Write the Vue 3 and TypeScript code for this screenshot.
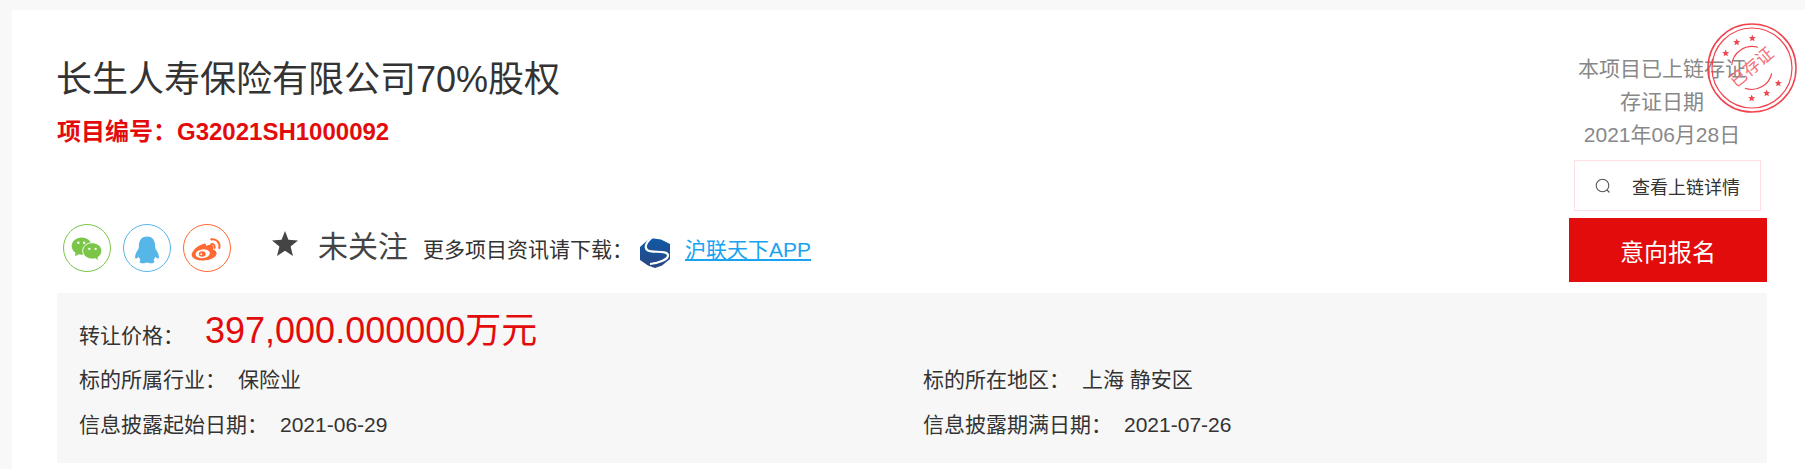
<script setup lang="ts">
const infoRows: { label: string; value: string }[] = [
  { label: '标的所属行业：', value: '保险业' },
  { label: '标的所在地区：', value: '上海 静安区' },
  { label: '信息披露起始日期：', value: '2021-06-29' },
  { label: '信息披露期满日期：', value: '2021-07-26' },
]
const stampStars: [number, number][] = [
  [18.7, 30.3], [29.7, 19.3], [45.3, 15.3], [44.7, 75.3], [59.7, 70.3], [71.3, 60.3],
]
function starPoints(cx: number, cy: number, r: number): string {
  const pts: string[] = []
  for (let i = 0; i < 10; i++) {
    const rad = i % 2 === 0 ? r : r * 0.42
    const a = -Math.PI / 2 + (i * Math.PI) / 5
    pts.push(`${(cx + rad * Math.cos(a)).toFixed(2)},${(cy + rad * Math.sin(a)).toFixed(2)}`)
  }
  return pts.join(' ')
}
</script>

<template>
  <div class="page">
    <div class="card">
      <div class="head">
        <div class="main">
          <h1 class="title">长生人寿保险有限公司70%股权</h1>
          <div class="code">项目编号：G32021SH1000092</div>
          <div class="actions">
            <div class="shares">
              <span class="share wechat">
                <svg viewBox="0 0 48 48" width="46" height="46">
                  <path fill="#7bc549" d="M18.500 13c-5.800 0-10.500 4-10.500 9 0 2.900 1.600 5.400 4 7l-.5 3.600 4.100-2.100c1.100.3 1.700.5 2.900.5 5.800 0 10.500-4 10.500-9s-4.700-9-10.500-9z" />
                  <path fill="#7bc549" stroke="#fff" stroke-width="1" d="M29.500 18.500c-5.500 0-10 3.800-10 8.500s4.500 8.500 10 8.500c1 0 2-.1 2.900-.4l3.800 2.300-.9-3.500c2.500-1.500 4.200-4 4.200-6.900 0-4.700-4.500-8.500-10-8.500z" />
                  <circle cx="15" cy="18.500" r="1.300" fill="#fff" /><circle cx="21" cy="18.500" r="1.300" fill="#fff" />
                  <circle cx="26.500" cy="25" r="1.200" fill="#fff" /><circle cx="33" cy="25" r="1.200" fill="#fff" />
                </svg>
              </span>
              <span class="share qq">
                <svg viewBox="0 0 48 48" width="46" height="46">
                  <path fill="#56b6e7" d="M24 12c-6.500 0-8.500 5-8.500 10.500 0 2.500-1.200 3.700-2.300 5.500-1.700 3-2 6.200-1.200 7 1 .2 2.300-.8 3.500-2 .2 1.300.8 2.400 1.800 3.400-1.800 1.200-1.300 3.600 2.200 3.600 2 0 3.500-1 4.500-1s2.500 1 4.500 1c3.500 0 4-2.400 2.200-3.600 1-1 1.600-2.100 1.800-3.400 1.200 1.200 2.500 2.200 3.500 2 .8-.8.500-4-1.200-7-1.100-1.800-2.300-3-2.300-5.500C32.500 17 30.500 12 24 12z" />
                </svg>
              </span>
              <span class="share weibo">
                <svg viewBox="0 0 48 48" width="46" height="46">
                  <path fill="#ff6a33" d="M21 19.500c-6.500 1.500-13 7.500-13 11.500 0 4 5.500 6 12 6 8 0 14-3.700 14-7.500 0-2.300-2-3.400-3.700-3.900.7-1.800.6-3.400-.5-4.300-1.500-1-4.300-.6-6.800.7.300-1.800-.4-3.200-2-2.500z" />
                  <ellipse cx="19.500" cy="30" rx="7.500" ry="4.600" fill="#fff" transform="rotate(-8 19.500 30)" />
                  <ellipse cx="19" cy="30.200" rx="3.600" ry="2.800" fill="#ff6a33" />
                  <circle cx="18" cy="30.400" r="1" fill="#fff" />
                  <path fill="none" stroke="#ff6a33" stroke-width="2.200" stroke-linecap="round" d="M28.500 20c2.200-.5 4 1.200 3.400 3.800M28.500 15c5.500-1 9.500 3.600 8.300 9" />
                </svg>
              </span>
            </div>
            <svg class="star" viewBox="0 0 26 25" width="26" height="25">
              <polygon fill="#444" points="13,0 16.400,8.700 26,9.500 18.600,15.500 21,25 13,19.800 5,25 7.400,15.500 0,9.500 9.600,8.700" />
            </svg>
            <span class="follow">未关注</span>
            <span class="more">更多项目资讯请下载：</span>
            <svg class="logo" viewBox="0 0 30 33" width="30" height="33">
              <defs>
                <linearGradient id="logoBlue" x1="0" y1="0" x2="0" y2="1">
                  <stop offset="0" stop-color="#0f5aa6" />
                  <stop offset="1" stop-color="#2a4684" />
                </linearGradient>
              </defs>
              <path fill="url(#logoBlue)" d="M10 3L21 4.500L30 9V24L22 30.500L15 33L8 30.500L0 25V12Z" />
              <path fill="none" stroke="#fff" stroke-width="2.200" d="M14.500 .5C6 6 3.500 13 8 15.500C13 18 27 15 28 20C28.500 24.500 19 28 10 29" />
            </svg>
            <a class="app-link">沪联天下APP</a>
          </div>
        </div>
        <div class="side">
          <div class="chain">
            <div>本项目已上链存证</div>
            <div>存证日期</div>
            <div>2021年06月28日</div>
          </div>
          <div class="detail">
            <svg viewBox="0 0 16 16" width="16" height="16">
              <circle cx="7.500" cy="7.500" r="6.300" fill="none" stroke="#555" stroke-width="1.100" />
              <path d="M12 12l2.500 2.500" stroke="#555" stroke-width="1.100" fill="none" />
            </svg>
            <span>查看上链详情</span>
          </div>
          <div class="apply">意向报名</div>
          <div class="stamp">
            <svg viewBox="0 0 90 90" width="90" height="90">
              <circle cx="45" cy="45" r="44" fill="none" stroke="#f0444f" stroke-width="1.500" />
              <circle cx="45" cy="45" r="40" fill="none" stroke="#f0444f" stroke-width="1.200" />
              <path d="M24.700 42A20.500 20.500 0 0 1 51 24.300M64.700 50.300A20.500 20.500 0 0 1 38 65.300" fill="none" stroke="#f0444f" stroke-width="1.200" />
              <polygon v-for="(s, i) in stampStars" :key="i" :points="starPoints(s[0], s[1], 3.800)" fill="#f0444f" />
            </svg>
            <span class="stamp-text">已存证</span>
          </div>
        </div>
      </div>
      <div class="panel">
        <div class="price-row">
          <span class="label">转让价格：</span>
          <span class="price">397,000.000000万元</span>
        </div>
        <div class="grid">
          <div v-for="row in infoRows" :key="row.label" class="cell">
            <span class="label">{{ row.label }}</span>
            <span class="value">{{ row.value }}</span>
          </div>
        </div>
      </div>
    </div>
  </div>
</template>

<style>
html, body {
  margin: 0;
  height: 469px;
  overflow: hidden;
  background: #f8f8f8;
}
</style>

<style scoped>
.page {
  padding: 10px 0 0 12px;
  font-family: "Liberation Sans", "Noto Sans CJK SC", sans-serif;
  color: #333;
}
.card {
  background: #fff;
  height: 459px;
  padding: 0 38px 0 44px;
  box-sizing: border-box;
}
.head {
  display: flex;
  justify-content: space-between;
  position: relative;
}
.main {
  padding-top: 46px;
}
.title {
  margin: 0;
  font-size: 36px;
  font-weight: 400;
  line-height: 48px;
}
.code {
  margin: 14px 0 0 1px;
  font-size: 24px;
  line-height: 28px;
  font-weight: 700;
  color: #e30c0c;
}
.actions {
  display: flex;
  align-items: center;
  margin-top: 78px;
  padding-left: 7px;
  height: 48px;
}
.shares {
  display: flex;
  gap: 12px;
}
.share {
  width: 48px;
  height: 48px;
  box-sizing: border-box;
  border: 1px solid;
  border-radius: 50%;
  display: block;
}
.share svg {
  display: block;
}
.wechat { border-color: #7bc549; }
.qq { border-color: #56b6e7; }
.weibo { border-color: #ff6a33; }
.star {
  margin: -10px 0 0 41px;
}
.follow {
  margin: -8px 0 0 20px;
  font-size: 30px;
  color: #444;
}
.more {
  margin: 0 0 0 15px;
  font-size: 21px;
}
.logo {
  margin: 7px 0 0 7px;
}
.app-link {
  margin: 0 0 0 15px;
  font-size: 21px;
  color: #1aa3f0;
  text-decoration: underline;
}
.side {
  width: 198px;
  padding-top: 42px;
  position: relative;
}
.chain {
  padding-right: 12px;
  font-size: 21px;
  line-height: 33px;
  color: #888;
  text-align: center;
  white-space: nowrap;
}
.detail {
  margin: 9px 6px 0 5px;
  height: 51px;
  box-sizing: border-box;
  border: 1px solid #fde0e2;
  display: flex;
  align-items: center;
  padding-left: 20px;
  gap: 21px;
  font-size: 18px;
}
.apply {
  margin-top: 7px;
  height: 64px;
  background: #e30c0c;
  color: #fff;
  font-size: 24px;
  display: flex;
  align-items: center;
  justify-content: center;
}
.stamp {
  position: absolute;
  left: 138px;
  top: 13px;
  width: 90px;
  height: 90px;
}
.stamp svg {
  display: block;
}
.stamp-text {
  position: absolute;
  left: 0;
  right: 0;
  top: 33px;
  text-align: center;
  font-size: 17px;
  line-height: 24px;
  color: #f2707a;
  transform: rotate(-40deg);
}
.panel {
  margin: 11px 0 0 1px;
  height: 170px;
  padding: 12px 23px 0 22px;
  box-sizing: border-box;
  background: #f7f7f7;
}
.price-row {
  display: flex;
  align-items: baseline;
  height: 52px;
}
.price {
  margin-left: 21px;
  font-size: 36px;
  line-height: 52px;
  color: #e30c0c;
}
.label, .value {
  font-size: 21px;
}
.grid {
  display: grid;
  grid-template-columns: 844px 1fr;
  grid-auto-rows: 45px;
}
.cell {
  display: flex;
  align-items: baseline;
  line-height: 45px;
}
.value {
  margin-left: 12px;
}
</style>
